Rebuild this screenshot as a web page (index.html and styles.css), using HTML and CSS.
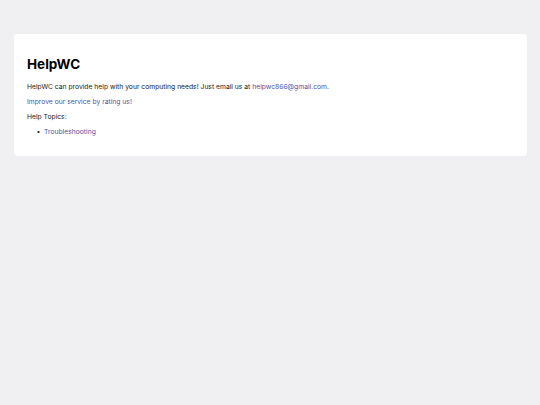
FILE: index.html
```html
<!DOCTYPE html>
<html lang="en">
<head>
<meta charset="utf-8">
<title>HelpWC</title>
<link rel="stylesheet" href="styles.css">
</head>
<body>
<main class="card">
  <h1 class="title">HelpWC</h1>
  <p class="text">HelpWC can provide help with your computing needs! Just email us at <a class="link" href="#">helpwc866@gmail.com</a>.</p>
  <p class="text"><a class="link" href="#">Improve our service by rating us!</a></p>
  <p class="text">Help Topics:</p>
  <ul class="topics">
    <li class="text item"><a class="link" href="#">Troubleshooting</a></li>
  </ul>
</main>
</body>
</html>
```

FILE: styles.css
```css
html, body {
  margin: 0;
  padding: 0;
  background: #f0f0f2;
}
body {
  padding: 34px 13px 0 14px;
  font-family: Inter, "Liberation Sans", sans-serif;
  color: #1a1a1a;
}
.card {
  background: #ffffff;
  border-radius: 4px;
  padding: 22px 13px 20px 13px;
}
.title {
  margin: 0 0 10.5px 0;
  font-size: 13.5px;
  line-height: 16.5px;
  font-weight: 700;
  color: #000;
}
.text {
  margin: 0 0 6.75px 0;
  font-size: 6.75px;
  line-height: 8.2px;
}
.link {
  color: #4f53a0;
  text-decoration: none;
}
.topics {
  margin: 0;
  padding-left: 9.5px;
  list-style: none;
}
.topics .item {
  margin: 0;
}
.item::before {
  content: "\2022";
  display: inline-block;
  width: 7.5px;
  color: #1a1a1a;
}
```
